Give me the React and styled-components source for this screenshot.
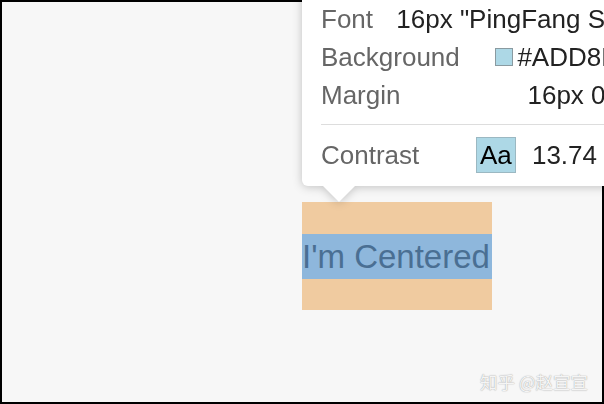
import React from 'react'
import styled, { createGlobalStyle } from 'styled-components'

const GlobalStyle = createGlobalStyle`
  html, body {
    margin: 0;
    padding: 0;
    overflow: hidden;
    background: #f7f7f7;
  }
`

const Page = styled.div`
  position: relative;
  width: 604px;
  height: 404px;
  overflow: hidden;
  font-family: "Liberation Sans", Arial, sans-serif;
`

const Frame = styled.div`
  position: relative;
  box-sizing: border-box;
  width: 100%;
  height: 100%;
  border: 2px solid #000;
  background: #f7f7f7;
`

// the demo element: its top-left corner sits at the exact middle
const Centered = styled.div`
  position: absolute;
  left: 50%;
  top: 50%;
  padding: 32px 0 31px;
  background: #f0cba0;
`

const CenteredText = styled.div`
  width: 190px;
  height: 45px;
  line-height: 45px;
  font-size: 33px;
  white-space: nowrap;
  background: #8eb7dc;
  color: #4a6f93;
`

const Tooltip = styled.div`
  position: absolute;
  left: 302px;
  top: -12px;
  width: 349px;
  box-sizing: border-box;
  padding: 12px 18px 12px 19px;
  background: #fff;
  border-radius: 6px;
  font-size: 26px;
  filter: drop-shadow(0 1px 5px rgba(0, 0, 0, 0.22));
  z-index: 2;
`

const Arrow = styled.div`
  position: absolute;
  top: 100%;
  left: 21px;
  width: 0;
  height: 0;
  border-left: 16px solid transparent;
  border-right: 16px solid transparent;
  border-top: 16px solid #fff;
`

const Row = styled.div`
  display: flex;
  justify-content: space-between;
  align-items: center;
  height: 38px;
  line-height: 38px;
  white-space: nowrap;
`

const Label = styled.span`
  color: #666;
`

const Value = styled.span`
  display: flex;
  align-items: center;
  gap: ${p => p.$gap || 0}px;
  color: #222;
`

const Swatch = styled.span`
  display: inline-block;
  box-sizing: border-box;
  width: 18px;
  height: 18px;
  background: #add8e6;
  border: 1px solid #8a9aa0;
`

const Divider = styled.div`
  height: 1px;
  background: #ddd;
  margin: 10px -18px 11px 0;
`

const Badge = styled.span`
  display: flex;
  align-items: center;
  justify-content: center;
  box-sizing: border-box;
  width: 40px;
  height: 36px;
  background: #add8e6;
  border: 1px solid #9bb8c2;
  color: #000;
  line-height: 1;
`

const Watermark = styled.div`
  position: absolute;
  right: 16px;
  bottom: 12px;
  font-family: "Noto Sans CJK SC", sans-serif;
  font-size: 17.5px;
  line-height: 20px;
  color: #f5f5f5;
  text-shadow: 0 0 1px rgba(0, 0, 0, 0.35), 0 0 2px rgba(0, 0, 0, 0.12);
  white-space: nowrap;
`

const Check = () => (
  <svg width="20" height="20" viewBox="0 0 20 20">
    <circle cx="10" cy="10" r="9" fill="#0a8043" />
    <path d="M5.5 10.2l3 3 6-6" fill="none" stroke="#fff" strokeWidth="2" />
  </svg>
)

export default function App() {
  return (
    <Page>
      <GlobalStyle />
      <Frame>
        <Centered>
          <CenteredText>I'm Centered</CenteredText>
        </Centered>
      </Frame>
      <Tooltip>
        <Row>
          <Label>Font</Label>
          <Value>{'16px "PingFang SC"'}</Value>
        </Row>
        <Row>
          <Label>Background</Label>
          <Value $gap={4}><Swatch />#ADD8E6</Value>
        </Row>
        <Row>
          <Label>Margin</Label>
          <Value>16px 0px</Value>
        </Row>
        <Divider />
        <Row>
          <Label>Contrast</Label>
          <Value $gap={16}>
            <Badge>Aa</Badge>
            13.74
            <Check />
          </Value>
        </Row>
        <Arrow />
      </Tooltip>
      <Watermark>知乎 @赵宣宣</Watermark>
    </Page>
  )
}
